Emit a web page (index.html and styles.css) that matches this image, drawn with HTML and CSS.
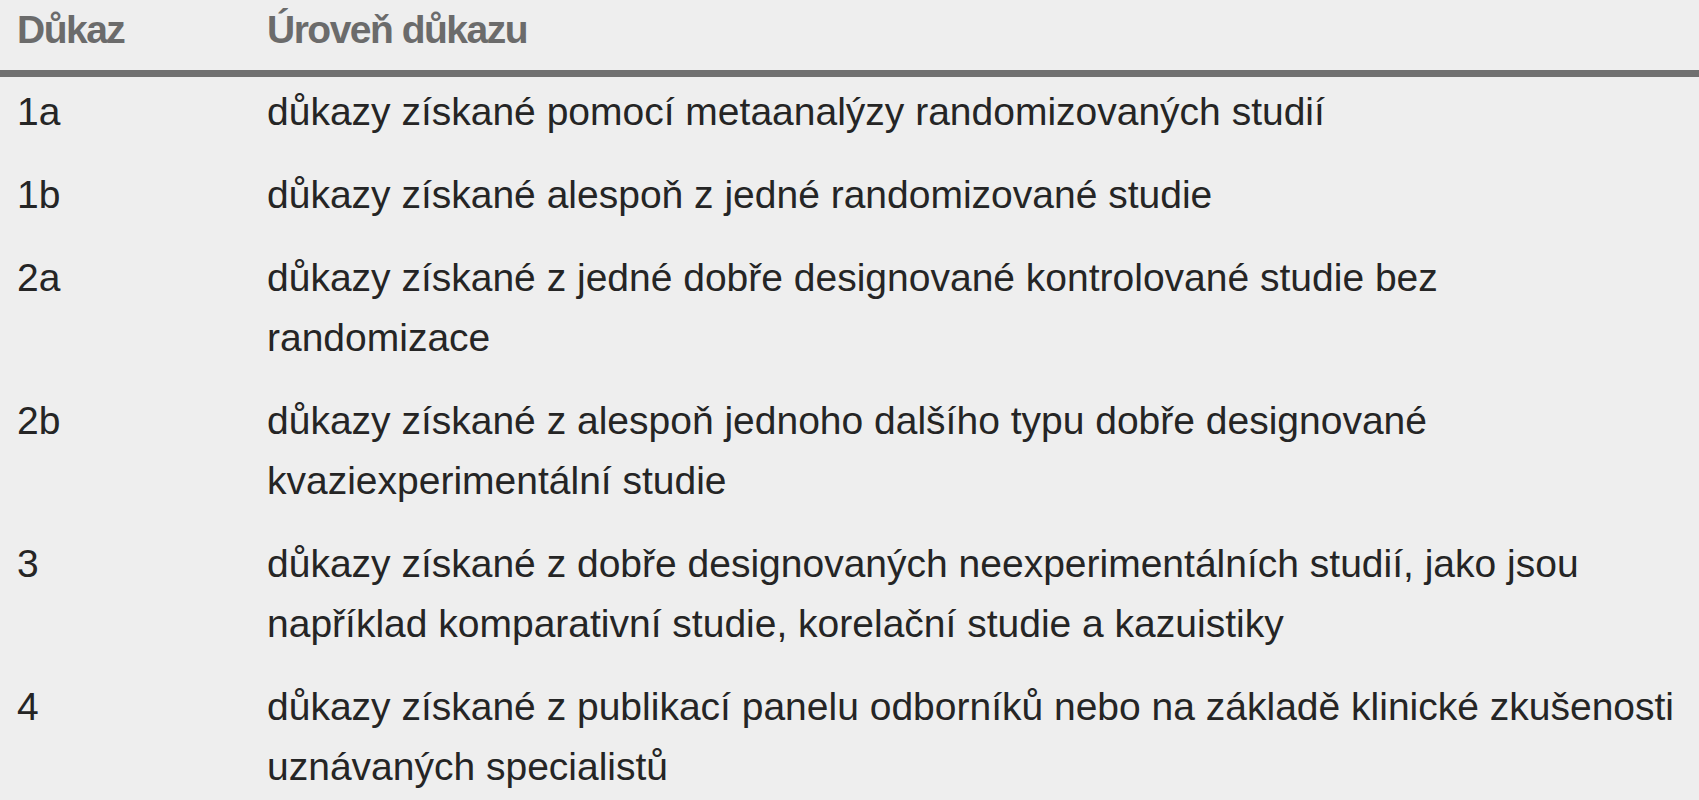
FILE: index.html
```html
<!DOCTYPE html>
<html lang="cs">
<head>
<meta charset="utf-8">
<title>Úroveň důkazu</title>
<link rel="stylesheet" href="styles.css">
</head>
<body>
<table class="evidence">
  <thead>
    <tr>
      <th class="col-level">Důkaz</th>
      <th class="col-desc">Úroveň důkazu</th>
    </tr>
  </thead>
  <tbody>
    <tr>
      <td class="col-level">1a</td>
      <td class="col-desc">důkazy získané pomocí metaanalýzy randomizovaných studií</td>
    </tr>
    <tr>
      <td class="col-level">1b</td>
      <td class="col-desc">důkazy získané alespoň z jedné randomizované studie</td>
    </tr>
    <tr>
      <td class="col-level">2a</td>
      <td class="col-desc">důkazy získané z jedné dobře designované kontrolované studie bez<br>randomizace</td>
    </tr>
    <tr>
      <td class="col-level">2b</td>
      <td class="col-desc">důkazy získané z alespoň jednoho dalšího typu dobře designované<br>kvaziexperimentální studie</td>
    </tr>
    <tr>
      <td class="col-level">3</td>
      <td class="col-desc">důkazy získané z dobře designovaných neexperimentálních studií, jako jsou<br>například komparativní studie, korelační studie a kazuistiky</td>
    </tr>
    <tr>
      <td class="col-level">4</td>
      <td class="col-desc">důkazy získané z publikací panelu odborníků nebo na základě klinické zkušenosti<br>uznávaných specialistů</td>
    </tr>
  </tbody>
</table>
</body>
</html>
```

FILE: styles.css
```css
html, body {
  margin: 0;
  padding: 0;
  background: #eeeeee;
}

body {
  font-family: "Liberation Sans", Arial, sans-serif;
  font-size: 39px;
  line-height: 60px;
  color: #252525;
}

.evidence {
  width: 100%;
  border-collapse: collapse;
  border-spacing: 0;
}

.evidence th,
.evidence td {
  text-align: left;
  vertical-align: top;
  padding: 5px 0 18px 0;
  white-space: nowrap;
}

.evidence th {
  font-weight: bold;
  color: #6b6b6b;
  letter-spacing: -1.5px;
  padding: 0 0 10px 0;
  border-bottom: 7px solid #707070;
}

.col-level {
  width: 250px;
  padding-left: 17px !important;
}

.col-desc {
  padding-right: 13px;
}
```
